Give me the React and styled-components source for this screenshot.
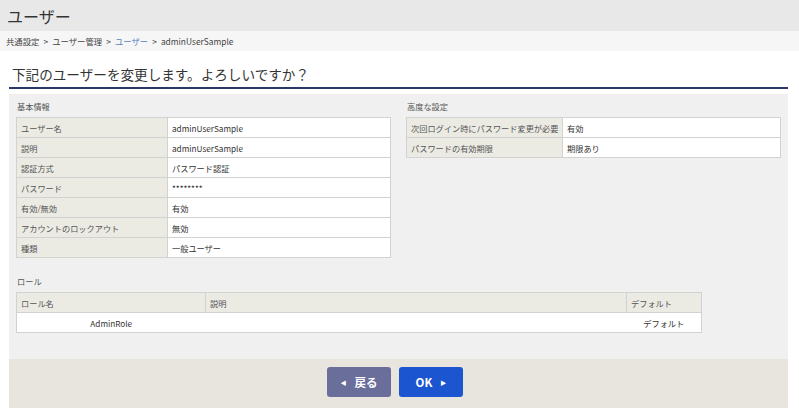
import React from "react";
import styled, { createGlobalStyle } from "styled-components";

const Global = createGlobalStyle`
  html, body { margin: 0; padding: 0; background: #ffffff; }
  body { font-family: "Noto Sans CJK JP", "Noto Sans", sans-serif; color: #333; }
`;

const Header = styled.header`
  height: 31px;
  background: #e8e8e8;
  display: flex;
  align-items: center;
  padding-left: 7px;
  font-size: 16px;
  color: #333;
`;

const Crumbs = styled.nav`
  height: 20px;
  background: #f6f6f6;
  display: flex;
  align-items: center;
  padding-left: 6px;
  font-size: 8.4px;
  color: #444;
  gap: 4px;
`;

const Crumb = styled.span`
  color: ${(p) => (p.$link ? "#5b7fc0" : "#444")};
`;

const Main = styled.main`
  padding: 0 11px 0 9px;
`;

const Title = styled.h2`
  margin: 0;
  height: 33px;
  display: flex;
  align-items: flex-end;
  padding: 0 0 3px 3px;
  box-sizing: content-box;
  font-size: 13.6px;
  font-weight: normal;
  color: #333;
  border-bottom: 2px solid #2b3766;
  line-height: 20px;
`;

const Panel = styled.section`
  margin-top: 5px;
  background: #f0f0f0;
  padding: 7px 7px 26px 7px;
`;

const Columns = styled.div`
  display: grid;
  grid-template-columns: 375px 375px;
  column-gap: 15px;
  align-items: start;
`;

const SectionLabel = styled.div`
  font-size: 8.2px;
  color: #555;
  height: 16px;
  line-height: 11px;
  padding-left: 1px;
`;

const Table = styled.table`
  border-collapse: collapse;
  width: ${(p) => p.$width || "100%"};
  font-size: 8.2px;
  background: #fff;
  table-layout: fixed;
`;

const Th = styled.td`
  height: 19px;
  border: 1px solid #d2d2d2;
  background: #ebebe4;
  color: #555;
  padding: 0 4px;
  width: ${(p) => p.$w || "auto"};
  white-space: nowrap;
  overflow: hidden;
  text-align: left;
`;

const Td = styled.td`
  height: 19px;
  border: 1px solid #d2d2d2;
  ${(p) => (p.$noLeft ? "border-left: none;" : "")}
  ${(p) => (p.$noRight ? "border-right: none;" : "")}
  background: #fff;
  color: #333;
  padding: 0 4px;
  text-align: ${(p) => (p.$center ? "center" : "left")};
`;

const RoleSection = styled.div`
  margin-top: 18px;
`;

const Footer = styled.div`
  background: #e8e4de;
  height: 49px;
  display: flex;
  justify-content: center;
  align-items: flex-start;
  padding-top: 8px;
  box-sizing: border-box;
  gap: 8px;
  padding-right: 7px;
`;

const Button = styled.button`
  width: 64px;
  height: 30px;
  border: none;
  border-radius: 3px;
  background: ${(p) => (p.$primary ? "#1b55cf" : "#6a6e9b")};
  color: #fff;
  font-family: "Noto Sans CJK JP", "Noto Sans", sans-serif;
  font-weight: bold;
  font-size: 11.5px;
  display: flex;
  align-items: center;
  justify-content: center;
  gap: 8px;
  padding: 0;
`;

const Arrow = styled.span`
  font-size: 6px;
  font-weight: normal;
`;

const basic = [
  ["ユーザー名", "adminUserSample"],
  ["説明", "adminUserSample"],
  ["認証方式", "パスワード認証"],
  ["パスワード", "********"],
  ["有効/無効", "有効"],
  ["アカウントのロックアウト", "無効"],
  ["種類", "一般ユーザー"],
];

const advanced = [
  ["次回ログイン時にパスワード変更が必要", "有効"],
  ["パスワードの有効期限", "期限あり"],
];

export default function App() {
  return (
    <>
      <Global />
      <Header>ユーザー</Header>
      <Crumbs>
        <Crumb>共通設定</Crumb>
        <Crumb>&gt;</Crumb>
        <Crumb>ユーザー管理</Crumb>
        <Crumb>&gt;</Crumb>
        <Crumb $link>ユーザー</Crumb>
        <Crumb>&gt;</Crumb>
        <Crumb>adminUserSample</Crumb>
      </Crumbs>
      <Main>
        <Title>下記のユーザーを変更します。よろしいですか？</Title>
        <Panel>
          <Columns>
            <div>
              <SectionLabel>基本情報</SectionLabel>
              <Table>
                <tbody>
                  {basic.map(([k, v]) => (
                    <tr key={k}>
                      <Th $w="142px">{k}</Th>
                      <Td>{v}</Td>
                    </tr>
                  ))}
                </tbody>
              </Table>
            </div>
            <div>
              <SectionLabel>高度な設定</SectionLabel>
              <Table>
                <tbody>
                  {advanced.map(([k, v]) => (
                    <tr key={k}>
                      <Th $w="147px">{k}</Th>
                      <Td>{v}</Td>
                    </tr>
                  ))}
                </tbody>
              </Table>
            </div>
          </Columns>
          <RoleSection>
            <SectionLabel>ロール</SectionLabel>
            <Table $width="686px">
              <tbody>
                <tr>
                  <Th $w="180px">ロール名</Th>
                  <Th>説明</Th>
                  <Th $w="66px">デフォルト</Th>
                </tr>
                <tr>
                  <Td $center $noRight>AdminRole</Td>
                  <Td $noLeft $noRight></Td>
                  <Td $center $noLeft>デフォルト</Td>
                </tr>
              </tbody>
            </Table>
          </RoleSection>
        </Panel>
        <Footer>
          <Button>
            <Arrow>◀</Arrow>
            <span>戻る</span>
          </Button>
          <Button $primary>
            <span>OK</span>
            <Arrow>▶</Arrow>
          </Button>
        </Footer>
      </Main>
    </>
  );
}
